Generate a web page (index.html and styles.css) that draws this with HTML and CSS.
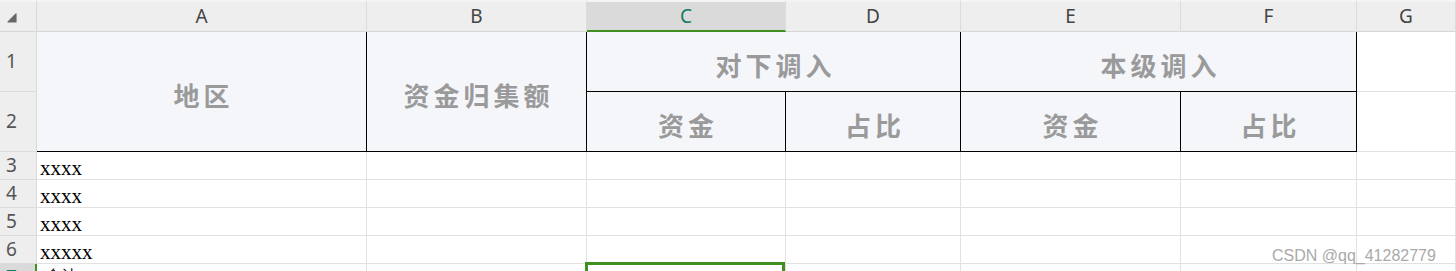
FILE: index.html
```html
<!DOCTYPE html>
<html lang="zh-CN">
<head>
<meta charset="utf-8">
<title>Sheet</title>
<link rel="stylesheet" href="styles.css">
</head>
<body>
<div class="sheet">
  <div class="corner"><svg class="tri" width="12" height="12" viewBox="0 0 12 12"><path d="M10 2 L10 10 L2 10 Z" fill="#686868" stroke="#686868" stroke-width="1.2" stroke-linejoin="round"/></svg></div>
  <div class="ch">A</div>
  <div class="ch">B</div>
  <div class="ch sel">C</div>
  <div class="ch">D</div>
  <div class="ch">E</div>
  <div class="ch">F</div>
  <div class="ch">G</div>

  <div class="rh">1</div>
  <div class="h span-r">地区</div>
  <div class="h span-r">资金归集额</div>
  <div class="h span-c">对下调入</div>
  <div class="h span-c">本级调入</div>
  <div class="c"></div>

  <div class="rh">2</div>
  <div class="h">资金</div>
  <div class="h">占比</div>
  <div class="h">资金</div>
  <div class="h">占比</div>
  <div class="c"></div>

  <div class="rh">3</div>
  <div class="c txt">xxxx</div>
  <div class="c"></div><div class="c"></div><div class="c"></div><div class="c"></div><div class="c"></div><div class="c"></div>

  <div class="rh">4</div>
  <div class="c txt">xxxx</div>
  <div class="c"></div><div class="c"></div><div class="c"></div><div class="c"></div><div class="c"></div><div class="c"></div>

  <div class="rh">5</div>
  <div class="c txt">xxxx</div>
  <div class="c"></div><div class="c"></div><div class="c"></div><div class="c"></div><div class="c"></div><div class="c"></div>

  <div class="rh">6</div>
  <div class="c txt">xxxxx</div>
  <div class="c"></div><div class="c"></div><div class="c"></div><div class="c"></div><div class="c"></div><div class="c"></div>

  <div class="rh rsel">7</div>
  <div class="c txt7">合计</div>
  <div class="c"></div>
  <div class="c active"></div>
  <div class="c"></div><div class="c"></div><div class="c"></div><div class="c"></div>

  <div class="mark">CSDN @qq_41282779</div>
</div>
</body>
</html>
```

FILE: styles.css
```css
html, body {
  margin: 0;
  padding: 0;
  background: #ffffff;
}
body {
  width: 1456px;
  height: 271px;
  overflow: hidden;
}
.sheet {
  position: relative;
  height: 271px;
  display: grid;
  grid-template-columns: 37px 330px 220px 199px 175px 220px 176px 99px;
  grid-template-rows: 32px 60px 60px 28px 28px 28px 28px 28px;
  overflow: hidden;
  font-family: "Noto Sans", "Liberation Sans", sans-serif;
}
.sheet > div {
  box-sizing: border-box;
}
.corner {
  background: #eeeeee;
  border-top: 2px solid #f4f4f4;
  border-right: 1px solid #d9d9d9;
  border-bottom: 1px solid #d6d6d6;
}
.tri {
  display: block;
  margin: 10px 0 0 6px;
}
.ch {
  background: #eeeeee;
  border-top: 2px solid #f4f4f4;
  border-right: 1px solid #dcdcdc;
  border-bottom: 1px solid #d6d6d6;
  display: flex;
  align-items: center;
  justify-content: center;
  font-size: 19px;
  color: #444444;
  line-height: 1;
}
.ch.sel {
  background: #dadada;
  color: #127a62;
  border-bottom: 2px solid #3f8f22;
  padding-top: 1px;
}
.rh {
  background: #eeeeee;
  border-right: 1px solid #d9d9d9;
  border-bottom: 1px solid #dcdcdc;
  display: flex;
  align-items: center;
  padding-left: 6px;
  font-size: 19px;
  color: #555555;
  line-height: 1;
}
.rh.rsel {
  background: #dadada;
  color: #127a62;
  border-right: 2px solid #3f8f22;
  align-items: center;
}
.h {
  background: #f5f6fa;
  border-right: 1px solid #000000;
  border-bottom: 1px solid #000000;
  display: flex;
  align-items: center;
  justify-content: center;
  padding-top: 6px;
  padding-left: 4px;
  font-family: "Noto Sans CJK SC", "Noto Sans", sans-serif;
  font-weight: bold;
  font-size: 26px;
  letter-spacing: 4px;
  color: #9a9a9a;
  line-height: 1;
}
.span-r {
  grid-row: span 2;
}
.span-c {
  grid-column: span 2;
}
.c {
  border-right: 1px solid #e1e1e1;
  border-bottom: 1px solid #e1e1e1;
  position: relative;
}
.txt {
  display: flex;
  align-items: flex-end;
  padding-left: 3px;
  font-family: "Liberation Serif", "Times New Roman", serif;
  font-size: 21px;
  line-height: 21px;
  color: #000000;
}
.txt7 {
  padding: 3px 0 0 8px;
  font-family: "Noto Sans CJK SC", sans-serif;
  font-size: 16px;
  line-height: 1;
  color: #222222;
}
.active::after {
  content: "";
  position: absolute;
  left: -2px;
  top: -2px;
  right: 0;
  bottom: 0;
  border: 3px solid #3f8f22;
}
.mark {
  position: absolute;
  left: 1272px;
  top: 248px;
  font-family: "Liberation Sans", Arial, sans-serif;
  font-size: 16px;
  line-height: 16px;
  color: #a9a9a9;
  white-space: nowrap;
}
```
